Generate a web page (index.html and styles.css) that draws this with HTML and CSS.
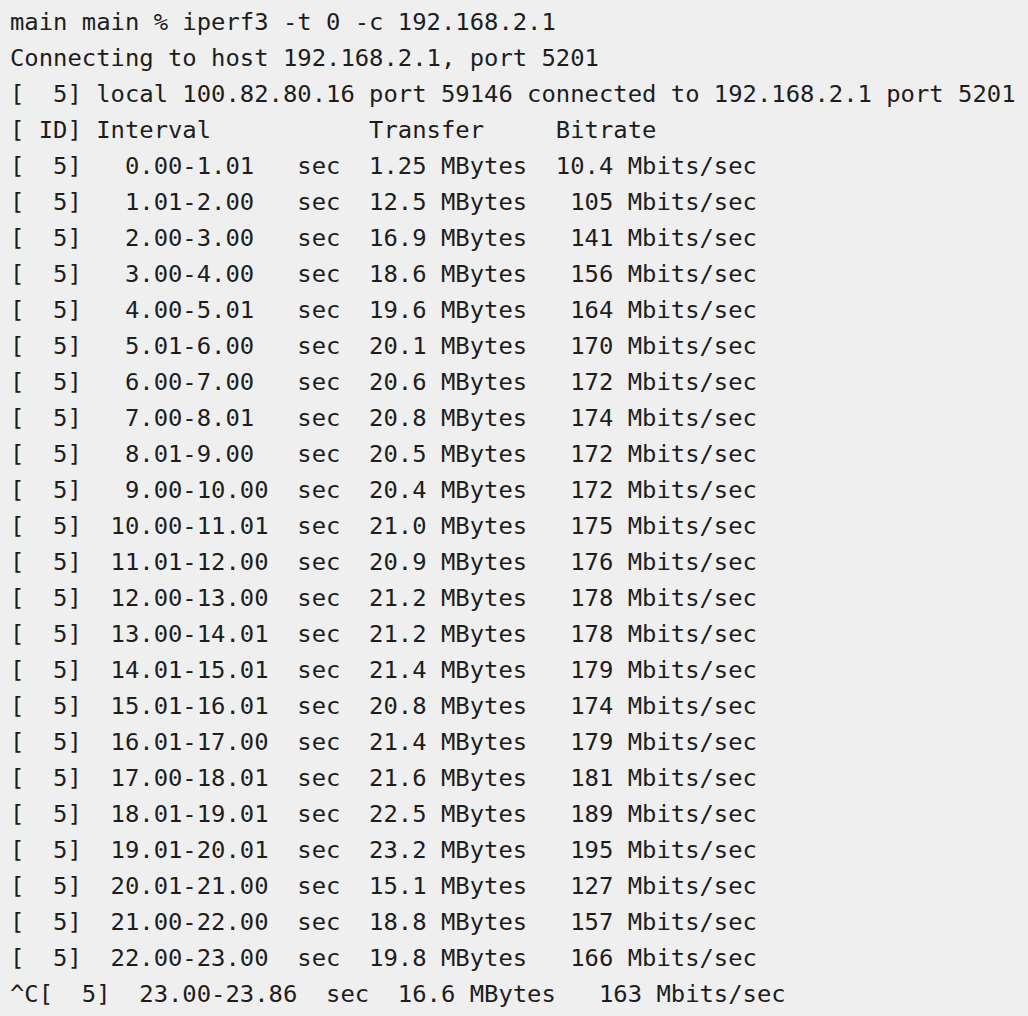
FILE: index.html
```html
<!DOCTYPE html>
<html lang="en">
<head>
<meta charset="utf-8">
<title>iperf3</title>
<link rel="stylesheet" href="styles.css">
</head>
<body>
<pre class="term">main main % iperf3 -t 0 -c 192.168.2.1
Connecting to host 192.168.2.1, port 5201
[  5] local 100.82.80.16 port 59146 connected to 192.168.2.1 port 5201
[ ID] Interval           Transfer     Bitrate
[  5]   0.00-1.01   sec  1.25 MBytes  10.4 Mbits/sec
[  5]   1.01-2.00   sec  12.5 MBytes   105 Mbits/sec
[  5]   2.00-3.00   sec  16.9 MBytes   141 Mbits/sec
[  5]   3.00-4.00   sec  18.6 MBytes   156 Mbits/sec
[  5]   4.00-5.01   sec  19.6 MBytes   164 Mbits/sec
[  5]   5.01-6.00   sec  20.1 MBytes   170 Mbits/sec
[  5]   6.00-7.00   sec  20.6 MBytes   172 Mbits/sec
[  5]   7.00-8.01   sec  20.8 MBytes   174 Mbits/sec
[  5]   8.01-9.00   sec  20.5 MBytes   172 Mbits/sec
[  5]   9.00-10.00  sec  20.4 MBytes   172 Mbits/sec
[  5]  10.00-11.01  sec  21.0 MBytes   175 Mbits/sec
[  5]  11.01-12.00  sec  20.9 MBytes   176 Mbits/sec
[  5]  12.00-13.00  sec  21.2 MBytes   178 Mbits/sec
[  5]  13.00-14.01  sec  21.2 MBytes   178 Mbits/sec
[  5]  14.01-15.01  sec  21.4 MBytes   179 Mbits/sec
[  5]  15.01-16.01  sec  20.8 MBytes   174 Mbits/sec
[  5]  16.01-17.00  sec  21.4 MBytes   179 Mbits/sec
[  5]  17.00-18.01  sec  21.6 MBytes   181 Mbits/sec
[  5]  18.01-19.01  sec  22.5 MBytes   189 Mbits/sec
[  5]  19.01-20.01  sec  23.2 MBytes   195 Mbits/sec
[  5]  20.01-21.00  sec  15.1 MBytes   127 Mbits/sec
[  5]  21.00-22.00  sec  18.8 MBytes   157 Mbits/sec
[  5]  22.00-23.00  sec  19.8 MBytes   166 Mbits/sec
^C[  5]  23.00-23.86  sec  16.6 MBytes   163 Mbits/sec</pre>
</body>
</html>
```
FILE: styles.css
```css
html, body {
  margin: 0;
  padding: 0;
  background: #efefef;
}
body {
  width: 1028px;
  height: 1016px;
  overflow: hidden;
}
.term {
  margin: 0;
  padding: 4px 0 0 10px;
  font-family: "DejaVu Sans Mono", "Liberation Mono", monospace;
  font-size: 23.87px;
  line-height: 36px;
  color: #1d1d1d;
  white-space: pre;
}
```
